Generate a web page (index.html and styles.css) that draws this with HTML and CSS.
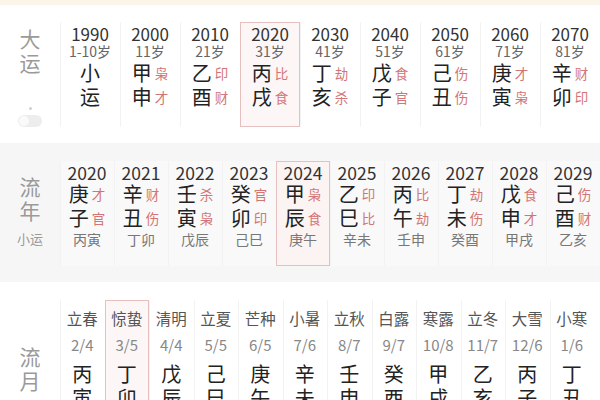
FILE: index.html
```html
<!DOCTYPE html>
<html lang="zh">
<head>
<meta charset="utf-8">
<link rel="stylesheet" href="styles.css">
</head>
<body>
<div class="topband"></div>

<section class="sec dayun">
  <div class="label">
    <div class="vlabel">大<br>运</div>
    <div class="dot"></div>
    <div class="toggle"><span class="knob"></span></div>
  </div>
  <div class="cols c9">
    <div class="col"><div class="year">1990</div><div class="age">1-10岁</div><div class="gz"><span class="c">小</span></div><div class="gz"><span class="c">运</span></div></div>
    <div class="col"><div class="year">2000</div><div class="age">11岁</div><div class="gz"><span class="c">甲</span><span class="g">枭</span></div><div class="gz"><span class="c">申</span><span class="g">才</span></div></div>
    <div class="col"><div class="year">2010</div><div class="age">21岁</div><div class="gz"><span class="c">乙</span><span class="g">印</span></div><div class="gz"><span class="c">酉</span><span class="g">财</span></div></div>
    <div class="col on"><div class="year">2020</div><div class="age">31岁</div><div class="gz"><span class="c">丙</span><span class="g">比</span></div><div class="gz"><span class="c">戌</span><span class="g">食</span></div></div>
    <div class="col"><div class="year">2030</div><div class="age">41岁</div><div class="gz"><span class="c">丁</span><span class="g">劫</span></div><div class="gz"><span class="c">亥</span><span class="g">杀</span></div></div>
    <div class="col"><div class="year">2040</div><div class="age">51岁</div><div class="gz"><span class="c">戊</span><span class="g">食</span></div><div class="gz"><span class="c">子</span><span class="g">官</span></div></div>
    <div class="col"><div class="year">2050</div><div class="age">61岁</div><div class="gz"><span class="c">己</span><span class="g">伤</span></div><div class="gz"><span class="c">丑</span><span class="g">伤</span></div></div>
    <div class="col"><div class="year">2060</div><div class="age">71岁</div><div class="gz"><span class="c">庚</span><span class="g">才</span></div><div class="gz"><span class="c">寅</span><span class="g">枭</span></div></div>
    <div class="col"><div class="year">2070</div><div class="age">81岁</div><div class="gz"><span class="c">辛</span><span class="g">财</span></div><div class="gz"><span class="c">卯</span><span class="g">印</span></div></div>
  </div>
</section>

<section class="sec liunian">
  <div class="label">
    <div class="vlabel">流<br>年</div>
    <div class="sublabel">小运</div>
  </div>
  <div class="cols c10">
    <div class="col"><div class="year">2020</div><div class="gz"><span class="c">庚</span><span class="g">才</span></div><div class="gz"><span class="c">子</span><span class="g">官</span></div><div class="br">丙寅</div></div>
    <div class="col"><div class="year">2021</div><div class="gz"><span class="c">辛</span><span class="g">财</span></div><div class="gz"><span class="c">丑</span><span class="g">伤</span></div><div class="br">丁卯</div></div>
    <div class="col"><div class="year">2022</div><div class="gz"><span class="c">壬</span><span class="g">杀</span></div><div class="gz"><span class="c">寅</span><span class="g">枭</span></div><div class="br">戊辰</div></div>
    <div class="col"><div class="year">2023</div><div class="gz"><span class="c">癸</span><span class="g">官</span></div><div class="gz"><span class="c">卯</span><span class="g">印</span></div><div class="br">己巳</div></div>
    <div class="col on"><div class="year">2024</div><div class="gz"><span class="c">甲</span><span class="g">枭</span></div><div class="gz"><span class="c">辰</span><span class="g">食</span></div><div class="br">庚午</div></div>
    <div class="col"><div class="year">2025</div><div class="gz"><span class="c">乙</span><span class="g">印</span></div><div class="gz"><span class="c">巳</span><span class="g">比</span></div><div class="br">辛未</div></div>
    <div class="col"><div class="year">2026</div><div class="gz"><span class="c">丙</span><span class="g">比</span></div><div class="gz"><span class="c">午</span><span class="g">劫</span></div><div class="br">壬申</div></div>
    <div class="col"><div class="year">2027</div><div class="gz"><span class="c">丁</span><span class="g">劫</span></div><div class="gz"><span class="c">未</span><span class="g">伤</span></div><div class="br">癸酉</div></div>
    <div class="col"><div class="year">2028</div><div class="gz"><span class="c">戊</span><span class="g">食</span></div><div class="gz"><span class="c">申</span><span class="g">才</span></div><div class="br">甲戌</div></div>
    <div class="col"><div class="year">2029</div><div class="gz"><span class="c">己</span><span class="g">伤</span></div><div class="gz"><span class="c">酉</span><span class="g">财</span></div><div class="br">乙亥</div></div>
  </div>
</section>

<section class="sec liuyue">
  <div class="label">
    <div class="vlabel">流<br>月</div>
  </div>
  <div class="cols c12">
    <div class="col"><div class="term">立春</div><div class="date">2/4</div><div class="gz first"><span class="c">丙</span></div><div class="gz"><span class="c">寅</span></div></div>
    <div class="col on"><div class="term">惊蛰</div><div class="date">3/5</div><div class="gz first"><span class="c">丁</span></div><div class="gz"><span class="c">卯</span></div></div>
    <div class="col"><div class="term">清明</div><div class="date">4/4</div><div class="gz first"><span class="c">戊</span></div><div class="gz"><span class="c">辰</span></div></div>
    <div class="col"><div class="term">立夏</div><div class="date">5/5</div><div class="gz first"><span class="c">己</span></div><div class="gz"><span class="c">巳</span></div></div>
    <div class="col"><div class="term">芒种</div><div class="date">6/5</div><div class="gz first"><span class="c">庚</span></div><div class="gz"><span class="c">午</span></div></div>
    <div class="col"><div class="term">小暑</div><div class="date">7/6</div><div class="gz first"><span class="c">辛</span></div><div class="gz"><span class="c">未</span></div></div>
    <div class="col"><div class="term">立秋</div><div class="date">8/7</div><div class="gz first"><span class="c">壬</span></div><div class="gz"><span class="c">申</span></div></div>
    <div class="col"><div class="term">白露</div><div class="date">9/7</div><div class="gz first"><span class="c">癸</span></div><div class="gz"><span class="c">酉</span></div></div>
    <div class="col"><div class="term">寒露</div><div class="date">10/8</div><div class="gz first"><span class="c">甲</span></div><div class="gz"><span class="c">戌</span></div></div>
    <div class="col"><div class="term">立冬</div><div class="date">11/7</div><div class="gz first"><span class="c">乙</span></div><div class="gz"><span class="c">亥</span></div></div>
    <div class="col"><div class="term">大雪</div><div class="date">12/6</div><div class="gz first"><span class="c">丙</span></div><div class="gz"><span class="c">子</span></div></div>
    <div class="col"><div class="term">小寒</div><div class="date">1/6</div><div class="gz first"><span class="c">丁</span></div><div class="gz"><span class="c">丑</span></div></div>
  </div>
</section>
</body>
</html>
```

FILE: styles.css
```css
* { box-sizing: border-box; margin: 0; padding: 0; }
html, body { width: 600px; height: 400px; overflow: hidden; background: #fff; }
body {
  font-family: "Noto Sans CJK SC", "Noto Sans", sans-serif;
  color: #333;
}
.topband { height: 5px; background: #fbf4e8; }

.sec { display: flex; }
.label {
  width: 60px;
  flex: none;
  display: flex;
  flex-direction: column;
  align-items: center;
  color: #9a9a9a;
}
.vlabel {
  font-size: 21px;
  line-height: 24px;
  text-align: center;
}
.cols { flex: 1; display: grid; }
.c9 { grid-template-columns: repeat(9, 60px); }
.c10 { grid-template-columns: repeat(10, 54px); }
.c12 { grid-template-columns: repeat(12, 44.5px); padding-right: 6px; }

.col {
  display: flex;
  flex-direction: column;
  align-items: center;
  border: 1px solid transparent;
  border-left-color: #f2f2f2;
}
.col.on {
  border: 1px solid #e6bfbf;
  background: #fdf6f6;
}

.year { font-size: 17px; line-height: 18px; color: #333; }
.age { font-size: 14px; line-height: 16px; color: #666; }
.gz {
  display: flex;
  align-items: center;
  justify-content: center;
  gap: 3px;
  height: 24px;
}
.c { font-size: 20px; line-height: 24px; color: #222; }
.g { font-size: 13.5px; line-height: 16px; color: #d37575; }
.br { font-size: 14px; line-height: 18px; color: #777; }
.term { font-size: 15.5px; line-height: 18px; color: #555; }
.date { font-size: 15px; line-height: 18px; color: #888; margin-top: 9px; }

/* 大运 */
.dayun { padding-top: 17px; height: 138px; }
.dayun .label { padding-top: 4px; }
.dayun .col { height: 105px; padding-top: 2px; }
.dayun .age { margin-bottom: 2px; }
.dot { width: 3px; height: 3px; border-radius: 50%; background: #d0d0d0; margin-top: 33px; }
.toggle {
  margin-top: 5px;
  width: 24px;
  height: 12px;
  border-radius: 6px;
  background: #ededed;
  display: flex;
  align-items: center;
  padding-left: 1px;
}
.knob { width: 10px; height: 10px; border-radius: 50%; background: #fafafa; }

/* 流年 */
.liunian { background: #f6f6f6; padding-top: 18px; height: 139px; }
.liunian .label { padding-top: 13px; }
.liunian .cols .col { height: 105px; padding-top: 2px; background: #f9f9f9; }
.liunian .cols .col.on { background: #fcf3f3; }
.liunian .year { font-size: 17.5px; }
.sublabel { font-size: 13px; line-height: 18px; margin-top: 8px; }

/* 流月 */
.liuyue { padding-top: 18px; }
.liuyue .label { padding-top: 44px; }
.liuyue .col { height: 120px; padding-top: 8px; }
.liuyue .gz.first { margin-top: 8px; }
```
